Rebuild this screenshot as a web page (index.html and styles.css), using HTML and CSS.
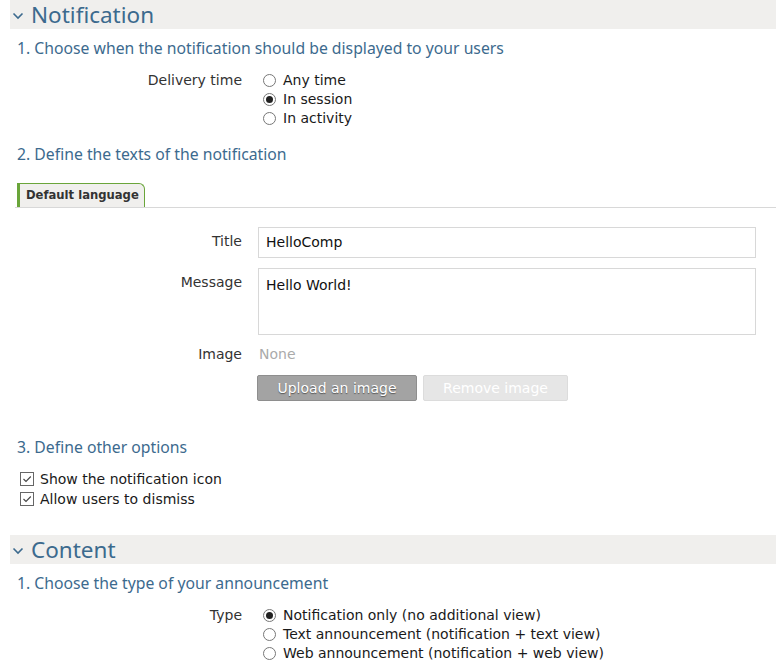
FILE: index.html
```html
<!DOCTYPE html>
<html>
<head>
<meta charset="utf-8">
<link rel="stylesheet" href="styles.css">
</head>
<body>
<div class="page">
  <section class="panel">
    <div class="panel-head">
      <svg class="chev" width="12" height="8" viewBox="0 0 12 8"><path d="M1.5 1.5 L6 6 L10.5 1.5" fill="none" stroke="#3c6a8e" stroke-width="1.6"/></svg>
      <span class="panel-title">Notification</span>
    </div>
    <h3 class="step">1. Choose when the notification should be displayed to your users</h3>
    <div class="row">
      <div class="label">Delivery time</div>
      <div class="options">
        <div class="opt"><span class="radio"></span>Any time</div>
        <div class="opt"><span class="radio on"></span>In session</div>
        <div class="opt"><span class="radio"></span>In activity</div>
      </div>
    </div>
    <h3 class="step step2">2. Define the texts of the notification</h3>
    <div class="tabs"><div class="tab">Default language</div></div>
    <div class="row field">
      <div class="label">Title</div>
      <div class="input">HelloComp</div>
    </div>
    <div class="row field">
      <div class="label">Message</div>
      <div class="input textarea">Hello World!</div>
    </div>
    <div class="row field img-row">
      <div class="label">Image</div>
      <div class="img-col">
        <div class="none">None</div>
        <div class="buttons">
          <span class="btn upload">Upload an image</span>
          <span class="btn remove">Remove image</span>
        </div>
      </div>
    </div>
    <h3 class="step step3">3. Define other options</h3>
    <div class="checks">
      <div class="opt"><span class="check"><svg width="10" height="8" viewBox="0 0 10 8"><path d="M1.5 4 L4 6.5 L8.8 1.5" fill="none" stroke="#444" stroke-width="1.1"/></svg></span>Show the notification icon</div>
      <div class="opt"><span class="check"><svg width="10" height="8" viewBox="0 0 10 8"><path d="M1.5 4 L4 6.5 L8.8 1.5" fill="none" stroke="#444" stroke-width="1.1"/></svg></span>Allow users to dismiss</div>
    </div>
  </section>
  <section class="panel">
    <div class="panel-head">
      <svg class="chev" width="12" height="8" viewBox="0 0 12 8"><path d="M1.5 1.5 L6 6 L10.5 1.5" fill="none" stroke="#3c6a8e" stroke-width="1.6"/></svg>
      <span class="panel-title">Content</span>
    </div>
    <h3 class="step">1. Choose the type of your announcement</h3>
    <div class="row">
      <div class="label">Type</div>
      <div class="options">
        <div class="opt"><span class="radio on"></span>Notification only (no additional view)</div>
        <div class="opt"><span class="radio"></span>Text announcement (notification + text view)</div>
        <div class="opt"><span class="radio"></span>Web announcement (notification + web view)</div>
      </div>
    </div>
  </section>
</div>
</body>
</html>
```
FILE: styles.css
```css
html, body { margin: 0; padding: 0; background: #fff; }
body { font-family: "DejaVu Sans", Verdana, sans-serif; font-size: 14px; color: #222; }
.page { width: 766px; margin-left: 10px; }
.panel-head {
  background: #f0efed;
  height: 29px;
  display: flex;
  align-items: center;
  gap: 7px;
  padding-left: 2px;
}
.chev { margin-top: 3px; }
.panel-title {
  font-family: "Noto Sans", "Open Sans", sans-serif;
  font-size: 22.5px;
  color: #3c6a8e;
  line-height: 29px;
}
.step {
  margin: 0;
  font-family: "Noto Sans", "Open Sans", sans-serif;
  font-weight: normal;
  font-size: 15.75px;
  color: #3c6a8e;
  padding: 8px 0 0 7px;
  line-height: 22px;
}
.step2 { padding-top: 15px; }
.step3 { padding-top: 35px; }
.row { display: flex; }
.label {
  width: 232px;
  text-align: right;
  padding-right: 16px;
  flex: none;
  line-height: 19px;
  color: #333;
}
.options { padding-left: 5px; }
.row:not(.field) { margin-top: 12px; }
.opt { display: flex; align-items: center; height: 19px; line-height: 19px; color: #1a1a1a; }
.radio {
  border: 1px solid #777; border-radius: 50%;
  margin-right: 7px; box-sizing: border-box; width: 13px; height: 13px;
  display: inline-flex; align-items: center; justify-content: center; background: #fff;
}
.radio.on::after { content: ""; width: 7px; height: 7px; border-radius: 50%; background: #222; }
.tabs {
  margin: 18px 0 0 5px;
  border-bottom: 1px solid #d8d8d8;
  display: flex;
}
.tab {
  margin-left: 2px;
  box-sizing: border-box;
  height: 24px;
  background: #f0efed;
  border-left: 3px solid #6aa53a;
  border-top: 1px solid #6aa53a;
  border-right: 1px solid #6aa53a;
  border-top-right-radius: 6px;
  font-weight: bold;
  font-size: 11.6px;
  padding: 0 5px 0 6px;
  color: #333;
  line-height: 23px;
}
.field { margin-top: 19px; }
.field + .field { margin-top: 10px; }
.field .label { line-height: 28px; }
.input {
  width: 498px; height: 31px; box-sizing: border-box;
  border: 1px solid #d8d8d8;
  padding: 0 7px;
  line-height: 29px;
  color: #111;
}
.textarea { height: 67px; line-height: 20px; padding-top: 6px; }
.field.img-row { margin-top: 10px; }
.img-row .label { line-height: 19px; }
.none { color: #aaa; line-height: 19px; padding-left: 1px; }
.buttons { display: flex; gap: 6px; margin-top: 11px; margin-left: -1px; }
.btn {
  display: inline-block;
  height: 26px; line-height: 25px; box-sizing: border-box;
  border-radius: 2px;
  color: #fff;
  font-size: 14px;
  text-align: center;
}
.upload { width: 160px; background: #a3a3a3; border: 1px solid #8e8e8e; text-shadow: 0 1px 1px #555; }
.remove { width: 145px; background: #e6e6e6; border: 1px solid #dcdcdc; }
.checks { margin: 11px 0 0 10px; padding-bottom: 26px; }
.checks .opt { height: 20px; line-height: 20px; }
.check {
  width: 14px; height: 14px; box-sizing: border-box; border: 1px solid #666;
  margin-right: 6px; display: inline-flex; align-items: center; justify-content: center;
}
```
